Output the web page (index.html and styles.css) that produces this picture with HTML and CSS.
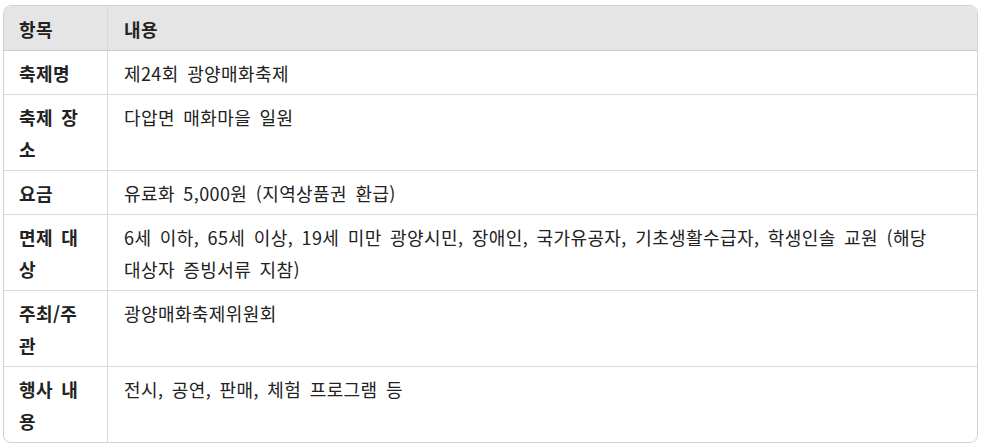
FILE: index.html
```html
<!DOCTYPE html>
<html lang="ko">
<head>
<meta charset="utf-8">
<link rel="stylesheet" href="styles.css">
</head>
<body>
<div class="wrap">
<table class="info">
<thead>
<tr><th class="key">항목</th><th class="val">내용</th></tr>
</thead>
<tbody>
<tr><td class="key">축제명</td><td class="val">제24회 광양매화축제</td></tr>
<tr><td class="key">축제 장소</td><td class="val">다압면 매화마을 일원</td></tr>
<tr><td class="key">요금</td><td class="val">유료화 5,000원 (지역상품권 환급)</td></tr>
<tr><td class="key">면제 대상</td><td class="val">6세 이하, 65세 이상, 19세 미만 광양시민, 장애인, 국가유공자, 기초생활수급자, 학생인솔 교원 (해당 대상자 증빙서류 지참)</td></tr>
<tr><td class="key">주최/주관</td><td class="val">광양매화축제위원회</td></tr>
<tr><td class="key">행사 내용</td><td class="val">전시, 공연, 판매, 체험 프로그램 등</td></tr>
</tbody>
</table>
</div>
</body>
</html>
```

FILE: styles.css
```css
html, body {
  margin: 0;
  padding: 0;
  background: #ffffff;
}
body {
  font-family: "Noto Sans CJK KR", "Noto Sans", sans-serif;
  font-size: 18px;
  color: #222222;
}
.wrap {
  padding: 5px 6px 0 3px;
}
.info {
  width: 100%;
  border-collapse: separate;
  border-spacing: 0;
  border: 1px solid #d2d2d2;
  border-radius: 8px;
  overflow: hidden;
}
.info th, .info td {
  text-align: left;
  vertical-align: top;
  padding: 6px 16px 5px 16px;
  line-height: 32px;
  letter-spacing: 0.4px;
  word-spacing: 3px;
  border-bottom: 1px solid #d9d9d9;
}
.info tr:last-child td {
  border-bottom: none;
}
.info th {
  background: #e5e5e5;
  font-weight: 700;
  padding-top: 7px;
  border-bottom: 1px solid #cccccc;
}
.info .key {
  width: 72px;
  padding-left: 15px;
  font-weight: 700;
  border-right: 1px solid #d9d9d9;
}
.info .val {
  word-break: keep-all;
}
```
